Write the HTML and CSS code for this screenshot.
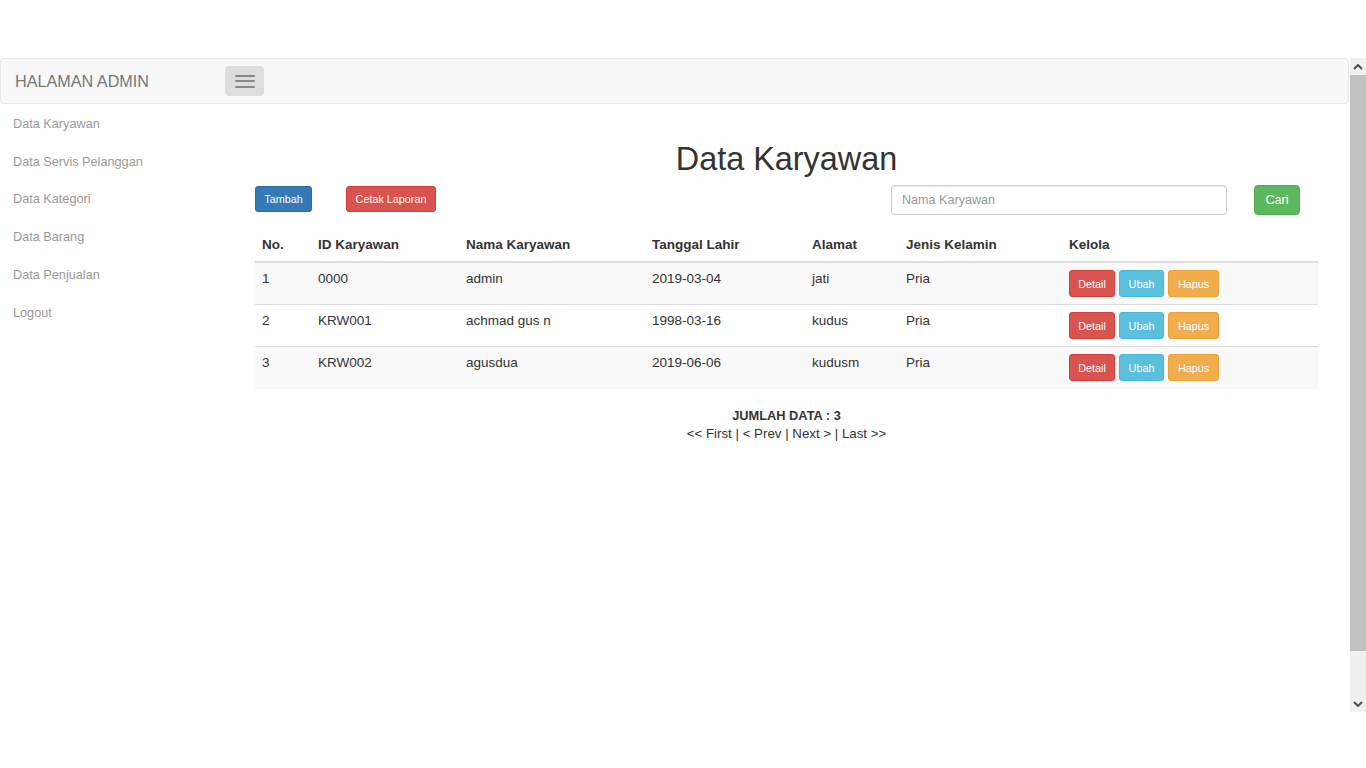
FILE: index.html
```html
<!DOCTYPE html>
<html lang="id">
<head>
<meta charset="utf-8">
<title>Data Karyawan</title>
<link rel="stylesheet" href="styles.css">
</head>
<body>
<div class="top-gap"></div>
<div class="frame">
  <div class="page">
    <nav class="navbar">
      <span class="brand">HALAMAN ADMIN</span>
      <button class="toggle" type="button" aria-label="menu">
        <span class="bar"></span><span class="bar"></span><span class="bar"></span>
      </button>
    </nav>
    <div class="layout">
      <aside class="sidebar">
        <a href="#">Data Karyawan</a>
        <a href="#">Data Servis Pelanggan</a>
        <a href="#">Data Kategori</a>
        <a href="#">Data Barang</a>
        <a href="#">Data Penjualan</a>
        <a href="#">Logout</a>
      </aside>
      <main class="main">
        <h1 class="title">Data Karyawan</h1>
        <div class="toolbar">
          <button class="btn btn-sm btn-primary" type="button">Tambah</button>
          <button class="btn btn-sm btn-danger btn-cetak" type="button">Cetak Laporan</button>
          <div class="spacer"></div>
          <input class="search" type="text" placeholder="Nama Karyawan">
          <button class="btn btn-success btn-cari" type="button">Cari</button>
        </div>
        <table class="table">
          <thead>
            <tr>
              <th class="c-no">No.</th>
              <th class="c-id">ID Karyawan</th>
              <th class="c-nama">Nama Karyawan</th>
              <th class="c-tgl">Tanggal Lahir</th>
              <th class="c-alamat">Alamat</th>
              <th class="c-jk">Jenis Kelamin</th>
              <th class="c-kelola">Kelola</th>
            </tr>
          </thead>
          <tbody>
            <tr>
              <td>1</td><td>0000</td><td>admin</td><td>2019-03-04</td><td>jati</td><td>Pria</td>
              <td><div class="actions"><button class="btn btn-xs btn-danger">Detail</button><button class="btn btn-xs btn-info">Ubah</button><button class="btn btn-xs btn-warning">Hapus</button></div></td>
            </tr>
            <tr>
              <td>2</td><td>KRW001</td><td>achmad gus n</td><td>1998-03-16</td><td>kudus</td><td>Pria</td>
              <td><div class="actions"><button class="btn btn-xs btn-danger">Detail</button><button class="btn btn-xs btn-info">Ubah</button><button class="btn btn-xs btn-warning">Hapus</button></div></td>
            </tr>
            <tr>
              <td>3</td><td>KRW002</td><td>agusdua</td><td>2019-06-06</td><td>kudusm</td><td>Pria</td>
              <td><div class="actions"><button class="btn btn-xs btn-danger">Detail</button><button class="btn btn-xs btn-info">Ubah</button><button class="btn btn-xs btn-warning">Hapus</button></div></td>
            </tr>
          </tbody>
        </table>
        <div class="summary">
          <div class="total">JUMLAH DATA : 3</div>
          <div class="pager">&lt;&lt; First | &lt; Prev | Next &gt; | Last &gt;&gt;</div>
        </div>
      </main>
    </div>
  </div>
  <div class="scrollbar">
    <div class="arrow">
      <svg width="10" height="6" viewBox="0 0 10 6"><path d="M1 5 L5 1 L9 5" fill="none" stroke="#505050" stroke-width="2"/></svg>
    </div>
    <div class="thumb"></div>
    <div class="track"></div>
    <div class="arrow">
      <svg width="10" height="6" viewBox="0 0 10 6"><path d="M1 1 L5 5 L9 1" fill="none" stroke="#505050" stroke-width="2"/></svg>
    </div>
  </div>
</div>
</body>
</html>
```

FILE: styles.css
```css
* { box-sizing: border-box; }

html, body {
  margin: 0;
  padding: 0;
  background: #fff;
  font-family: "Liberation Sans", Arial, Helvetica, sans-serif;
  color: #333;
}

.top-gap { height: 58px; }

.frame {
  height: 654px;
  display: flex;
}

.page {
  flex: 1;
  overflow: hidden;
}

.navbar {
  height: 46px;
  margin-right: 1px;
  background: #f8f8f8;
  border: 1px solid #e7e7e7;
  border-radius: 4px;
  display: flex;
  align-items: center;
  padding-left: 14px;
}

.brand {
  font-size: 16.2px;
  color: #777;
  width: 210px;
}

.toggle {
  width: 39px;
  height: 30px;
  background: #ddd;
  border: 1px solid #ddd;
  border-radius: 4px;
  display: flex;
  flex-direction: column;
  align-items: center;
  justify-content: center;
  gap: 3.5px;
  padding: 0;
}

.toggle .bar {
  display: block;
  width: 20px;
  height: 2px;
  background: #888;
  border-radius: 1px;
}

.layout {
  display: flex;
}

.sidebar {
  width: 255px;
  flex: none;
  display: flex;
  flex-direction: column;
  padding-top: 2px;
}

.sidebar a {
  display: block;
  padding: 10px 13px;
  line-height: 17.7px;
  font-size: 12.7px;
  color: #999;
  text-decoration: none;
}

.main {
  flex: 1;
  padding-right: 32px;
}

.title {
  margin: 37px 0 8px;
  font-size: 32.4px;
  line-height: 36px;
  font-weight: 500;
  text-align: center;
  color: #333;
}

.toolbar {
  display: flex;
  align-items: flex-start;
  padding-right: 18px;
  margin-bottom: 13px;
}

.spacer { flex: 1; }

.btn {
  font-family: inherit;
  color: #fff;
  border: 1px solid transparent;
  border-radius: 3px;
  cursor: pointer;
  white-space: nowrap;
}

.btn-sm {
  height: 26px;
  margin-top: 1px;
  font-size: 10.8px;
  padding: 0;
}

.btn-primary { background: #337ab7; border-color: #2e6da4; }
.btn-danger { background: #d9534f; border-color: #d43f3a; }
.btn-success { background: #5cb85c; border-color: #4cae4c; }
.btn-info { background: #5bc0de; border-color: #46b8da; }
.btn-warning { background: #f0ad4e; border-color: #eea236; }

.btn-cetak { margin-left: 34px; width: 90px; }
.btn-primary.btn-sm { width: 57px; }

.search {
  width: 336px;
  height: 30px;
  border: 1px solid #ccc;
  border-radius: 4px;
  padding: 0 10px;
  font-family: inherit;
  font-size: 12.6px;
  color: #555;
  box-shadow: inset 0 1px 1px rgba(0,0,0,.075);
}

.search::placeholder { color: #999; }

.btn-cari {
  margin-left: 27px;
  width: 46px;
  height: 30px;
  font-size: 12.6px;
  border-radius: 4px;
  padding: 0;
}

.table {
  width: 100%;
  border-collapse: collapse;
  font-size: 13.5px;
  color: #333;
}

.table th {
  text-align: left;
  font-weight: bold;
  padding: 7px;
  line-height: 19px;
  border-bottom: 2px solid #ddd;
  vertical-align: bottom;
}

.table td {
  padding: 7px;
  line-height: 17px;
  border-top: 1px solid #ddd;
  vertical-align: top;
  height: 42px;
}

.table tbody tr:nth-child(odd) { background: #f9f9f9; }

.c-no { width: 56px; }
.c-id { width: 148px; }
.c-nama { width: 186px; }
.c-tgl { width: 160px; }
.c-alamat { width: 94px; }
.c-jk { width: 163px; }

.actions {
  display: flex;
  gap: 4px;
}

.btn-xs {
  height: 27px;
  font-size: 10.8px;
  padding: 0;
}

.btn-xs.btn-danger { width: 46px; }
.btn-xs.btn-info { width: 45px; }
.btn-xs.btn-warning { width: 51px; }

.summary {
  margin-top: 18px;
  text-align: center;
  line-height: 18px;
  color: #333;
}

.total { font-weight: bold; font-size: 12.8px; }
.pager { font-size: 13.3px; }

.scrollbar {
  width: 16px;
  flex: none;
  background: #f0f0f0;
  display: flex;
  flex-direction: column;
}

.arrow {
  height: 17px;
  display: flex;
  align-items: center;
  justify-content: center;
}

.thumb {
  height: 576px;
  background: #c1c1c1;
}

.track { flex: 1; }
```
